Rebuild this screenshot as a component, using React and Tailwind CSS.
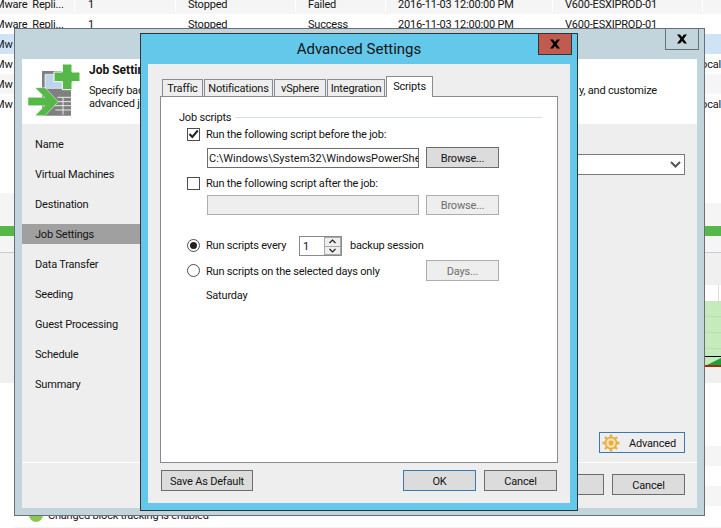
const rows = [
  { h: "h-[14px] items-end pb-[2px]", bg: "bg-[#f5f5f5]", c: ["Mware  Repli...", "1", "Stopped", "Failed", "2016-11-03 12:00:00 PM", "V600-ESXIPROD-01", ""] },
  { h: "h-[20px] items-center", bg: "bg-white", c: ["Mware  Repli...", "1", "Stopped", "Success", "2016-11-03 12:00:00 PM", "V600-ESXIPROD-01", ""] },
  { h: "h-[20px] items-center", bg: "bg-[#cfe3f7]", c: ["Mw", "", "", "", "", "", ""] },
  { h: "h-[20px] items-center", bg: "bg-white", c: ["Mw", "", "", "", "", "", "Local"] },
  { h: "h-[20px] items-center", bg: "bg-[#f5f5f5]", c: ["Mw", "", "", "", "", "", ""] },
  { h: "h-[20px] items-center", bg: "bg-white", c: ["Mw", "", "", "", "", "", "Local"] },
];
const cols = ["w-[80px] -ml-[5px]", "w-[101px] pl-[13px]", "w-[120px] pl-[12px]", "w-[90px] pl-[12px]", "w-[167px] pl-[12px]", "w-[150px] pl-[12px]", "w-[18px] min-w-0 flex justify-end"];

function X() {
  return (
    <svg width="12" height="10" viewBox="0 0 12 10">
      <path d="M1 0.5h3l2 2.5 2-2.5h3L7.6 5 11 9.5H8L6 7 4 9.5H1L4.4 5z" fill="#000" />
    </svg>
  );
}

function JobIcon() {
  return (
    <svg width="70" height="70" viewBox="0 0 210 210" className="block">
      <path d="M66 48h87v134H66z" fill="#808080" />
      <path d="M75 58h52v42h-52z" fill="#bcd4ee" stroke="#fff" strokeWidth="2" />
      <path d="M129 127v52M112 127h41M106 140h47M102 152h51M106 165h47" stroke="#fff" strokeWidth="2.5" fill="none" />
      <path d="M127 27h29v24h24v29h-24v24h-29V80h-25V51h25z" fill="#55b848" stroke="#fff" strokeWidth="3" />
      <path d="M45 98h30l40 42-40 42H45l29-30H24v-25h50z" fill="#55b848" stroke="#fff" strokeWidth="1.5" />
    </svg>
  );
}

function Gear() {
  return (
    <svg width="18" height="18" viewBox="0 0 18 18">
      <g stroke="#e6ad3f" strokeWidth="2.4">
        <path d="M9 0.5v3M9 14.5v3M0.5 9h3M14.5 9h3M3 3l2 2M13 13l2 2M15 3l-2 2M5 13l-2 2" />
      </g>
      <circle cx="9" cy="9" r="5.6" fill="#f5dfae" stroke="#e6ad3f" strokeWidth="1.6" />
      <circle cx="9" cy="9" r="2.4" fill="#e6ad3f" />
    </svg>
  );
}

function Btn({ className = "", children, disabled, blue }) {
  return (
    <div className={`flex items-center justify-center border shrink-0 ${disabled ? "bg-[#eeeeee] border-[#adadad] text-[#6d6d6d]" : blue ? "bg-[#dcdcdc] border-[#3a7ab0]" : "bg-[#dcdcdc] border-[#6d6d6d]"} ${className}`}>
      {children}
    </div>
  );
}

function Tab({ w, active, children }) {
  return (
    <div className={`border border-b-0 border-[#8a8a96] flex items-center justify-center shrink-0 ${w} ${active ? "bg-white h-[21px] mt-0 z-10 -mb-px pb-[2px]" : "bg-[#eeeeee] h-[17px] mt-[3px]"}`}>
      {children}
    </div>
  );
}

function Check({ on }) {
  return (
    <div className="w-[13px] h-[13px] border border-[#4d4d4d] bg-white shrink-0 flex items-center justify-center">
      {on && (
        <svg width="11" height="10" viewBox="0 0 11 10">
          <path d="M1.5 5l2.8 3L9.8 1.5" fill="none" stroke="#222" strokeWidth="2" />
        </svg>
      )}
    </div>
  );
}

function Radio({ on }) {
  return (
    <div className="w-[13px] h-[13px] rounded-full border border-[#4d4d4d] bg-white shrink-0 flex items-center justify-center">
      {on && <div className="w-[7px] h-[7px] rounded-full bg-[#222]" />}
    </div>
  );
}

function Spin() {
  return (
    <div className="w-[17px] h-full bg-[#a9a9a9] flex flex-col gap-px p-px shrink-0">
      <div className="flex-1 bg-[#eeeeee] flex items-center justify-center">
        <svg width="7" height="5" viewBox="0 0 7 5"><path d="M0.5 4L3.5 1l3 3" fill="none" stroke="#222" strokeWidth="1.2" /></svg>
      </div>
      <div className="flex-1 bg-[#eeeeee] flex items-center justify-center">
        <svg width="7" height="5" viewBox="0 0 7 5"><path d="M0.5 1L3.5 4l3-3" fill="none" stroke="#222" strokeWidth="1.2" /></svg>
      </div>
    </div>
  );
}

const navItems = ["Name", "Virtual Machines", "Destination", "Job Settings", "Data Transfer", "Seeding", "Guest Processing", "Schedule", "Summary"];

export default function App() {
  return (
    <div className="relative w-[721px] h-[528px] overflow-hidden bg-white text-[11px] tracking-[-0.2px] leading-[15px] text-[#141414] font-['Roboto','Liberation_Sans',sans-serif]">
      {/* page behind the wizard */}
      <div className="flex flex-col h-full">
        {rows.map((r, i) => (
          <div key={i} className={`flex overflow-hidden whitespace-pre shrink-0 ${r.h} ${r.bg}`}>
            {r.c.map((t, j) => (
              <div key={j} className={`shrink-0 ${cols[j]} ${j < 6 && i < 2 ? "border-r border-white" : ""}`}>{t}</div>
            ))}
          </div>
        ))}
        <div className="flex flex-1">
          <div className="w-[14px] flex flex-col">
            <div className="h-[79px]" />
            <div className="h-[33px] bg-[#f5f5f5]" />
            <div className="h-[10px] bg-[#55b848]" />
            <div className="h-[16px] bg-[#f5f5f5]" />
            <div className="h-px bg-[#cccccc]" />
            <div className="h-[130px] bg-[#f0f0f0]" />
          </div>
          <div className="flex-1 flex flex-col justify-end">
            <div className="flex items-center h-[14px] mb-[5px] pl-[15px] gap-[5px] whitespace-nowrap">
              <div className="w-[14px] h-[14px] rounded-full bg-[#8cc850]" />
              <span>Changed block tracking is enabled</span>
            </div>
            <div className="h-[2px] bg-[#f5f5f5]" />
          </div>
          <div className="w-[16px] flex flex-col">
            <div className="h-[89px]" />
            <div className="h-[23px] bg-[#f5f5f5]" />
            <div className="h-[10px] bg-[#55b848]" />
            <div className="h-[16px] bg-[#f5f5f5]" />
            <div className="h-px bg-[#cccccc]" />
            <div className="h-[32px] bg-[#f0f0f0]" />
            <div className="h-[16px] flex justify-end"><div className="w-px h-full bg-[#dddddd] mr-[2px]" /></div>
            <svg width="16" height="66" viewBox="0 0 16 66" className="block shrink-0">
              <rect width="16" height="55" fill="#c5eabb" />
              <path d="M0 15.5h16M0 31.5h16M0 47.5h16" stroke="#b8dfae" />
              <rect y="55" width="16" height="1" fill="#000" />
              <rect y="56" width="16" height="8" fill="#c5eabb" />
              <path d="M2 64L16 57v7z" fill="#1ea03c" />
              <rect y="64" width="16" height="2" fill="#a52a0a" />
            </svg>
            <div className="h-[16px] bg-[#f0f0f0]" />
            <div className="h-[63px]" />
            <div className="h-[20px] bg-[#f5f5f5]" />
            <div className="h-[20px]" />
            <div className="h-[20px] bg-[#f5f5f5]" />
            <div className="h-[21px]" />
            <div className="h-[2px] bg-[#f5f5f5]" />
          </div>
        </div>
      </div>

      {/* wizard window */}
      <div className="absolute left-[14px] top-[28px] w-[691px] h-[488px] border border-[#6b6f74] bg-[#c2d5dc] pt-[30px] px-[7px] pb-[7px]">
        <div className="absolute right-[5px] top-[-1px] w-[34px] h-[22px] border border-[#6b6f74] flex items-center justify-center"><X /></div>
        <div className="flex flex-col h-full bg-[#eeeeee]">
          <div className="h-[65px] bg-white flex shrink-0">
            <div className="w-[67px] shrink-0"><div className="-ml-[2px] -mt-[4px]"><JobIcon /></div></div>
            <div className="flex-1 pr-[40px] pt-[4px]">
              <div className="font-bold text-[12px] leading-[14px] tracking-normal">Job Settings</div>
              <div className="flex justify-between mt-[6px] whitespace-nowrap h-[14px]"><span>Specify backup</span><span>y, and customize</span></div>
              <div className="whitespace-nowrap -mt-px">advanced job settings</div>
            </div>
          </div>
          <div className="flex flex-1 min-h-0">
            <div className="w-[130px] pt-[10px] flex flex-col gap-[10px] shrink-0">
              {navItems.map((n) => (
                <div key={n} className={`h-[20px] flex items-center pl-[13px] pt-px ${n === "Job Settings" ? "bg-[#a0a0a0]" : ""}`}>{n}</div>
              ))}
            </div>
            <div className="flex-1 flex flex-col pt-[30px] pr-[12px] pb-[9px]">
              <div className="h-[21px] border border-[#7a7a7a] bg-white flex items-center justify-end pr-[3px]">
                <svg width="11" height="7" viewBox="0 0 11 7"><path d="M1 1l4.5 4.5L10 1" fill="none" stroke="#555" strokeWidth="2" /></svg>
              </div>
              <div className="mt-auto self-end w-[86px] h-[21px] border border-[#3a7ab0] flex items-center pl-[2px] gap-[9px]">
                <Gear /><span className="pt-px">Advanced</span>
              </div>
            </div>
          </div>
          <div className="h-[46px] border-t border-white flex justify-end gap-[8px] pt-[11px] pr-[12px] shrink-0">
            <Btn className="w-[73px] h-[21px]" />
            <Btn className="w-[73px] h-[21px] pt-px">Cancel</Btn>
          </div>
        </div>
      </div>

      {/* advanced settings dialog */}
      <div className="absolute left-[140px] top-[33px] w-[438px] h-[478px] border border-[#2f3438] bg-[#63c8ea] px-[7px] pb-[7px] flex flex-col">
        <div className="h-[30px] flex items-center justify-center text-[15px] tracking-normal shrink-0">Advanced Settings</div>
        <div className="absolute right-[5px] top-[-1px] w-[34px] h-[22px] border border-[#2f3438] bg-[#c25b4f] flex items-center justify-center"><X /></div>
        <div className="flex-1 min-h-0 bg-[#eeeeee] pt-[12px] pl-[12px] flex flex-col">
          <div className="flex h-[20px] pl-[2px] gap-px shrink-0 relative">
            <Tab w="w-[41px]">Traffic</Tab>
            <Tab w="w-[69px]">Notifications</Tab>
            <Tab w="w-[52px]">vSphere</Tab>
            <Tab w="w-[58px]">Integration</Tab>
            <Tab w="w-[47px]" active>Scripts</Tab>
          </div>
          <div className="w-[398px] h-[367px] border border-[#8a8a96] bg-white pl-[18px] shrink-0 flex flex-col">
            <div className="flex items-center h-[14px] mt-[13px] mr-[15px] gap-[4px]">
              <span>Job scripts</span><div className="flex-1 h-px bg-[#d5dfe5]" />
            </div>
            <div className="ml-[8px] w-[312px] flex flex-col">
              <div className="flex items-center h-[14px] mt-[3px] gap-[6px]"><Check on /><span>Run the following script before the job:</span></div>
              <div className="flex justify-between items-end h-[21px] mt-[6px] pl-[20px]">
                <div className="w-[212px] h-[20px] border border-[#6d6d6d] bg-white flex items-center pl-[1px] overflow-hidden whitespace-nowrap tracking-normal">C:\Windows\System32\WindowsPowerShell\v1.0</div>
                <Btn className="w-[73px] h-[21px] pt-px">Browse...</Btn>
              </div>
              <div className="flex items-center h-[14px] mt-[8px] gap-[6px]"><Check /><span>Run the following script after the job:</span></div>
              <div className="flex justify-between h-[20px] mt-[5px] pl-[20px]">
                <div className="w-[212px] h-[20px] border border-[#adadad] bg-[#eeeeee]" />
                <Btn disabled className="w-[73px] h-[20px]">Browse...</Btn>
              </div>
              <div className="flex items-center h-[20px] mt-[21px]">
                <div className="mb-[2px]"><Radio on /></div>
                <span className="ml-[6px] w-[93px] mb-[2px]">Run scripts every</span>
                <div className="w-[43px] h-full border border-[#8a8a8a] bg-white flex items-center justify-between pl-[3px]">
                  <span>1</span><Spin />
                </div>
                <span className="ml-[8px] mb-[2px]">backup session</span>
              </div>
              <div className="flex items-center h-[21px] mt-[4px] gap-[6px]">
                <Radio /><span className="pt-px">Run scripts on the selected days only</span>
                <Btn disabled className="w-[73px] h-[21px] ml-auto pt-px">Days...</Btn>
              </div>
              <div className="h-[14px] mt-[7px] pl-[19px]">Saturday</div>
            </div>
          </div>
          <div className="flex mt-[7px] pl-px pr-[13px] shrink-0">
            <Btn className="w-[92px] h-[21px] pt-px">Save As Default</Btn>
            <Btn blue className="w-[73px] h-[21px] ml-auto mr-[8px] pt-px">OK</Btn>
            <Btn className="w-[73px] h-[21px] pt-px">Cancel</Btn>
          </div>
        </div>
      </div>
    </div>
  );
}
